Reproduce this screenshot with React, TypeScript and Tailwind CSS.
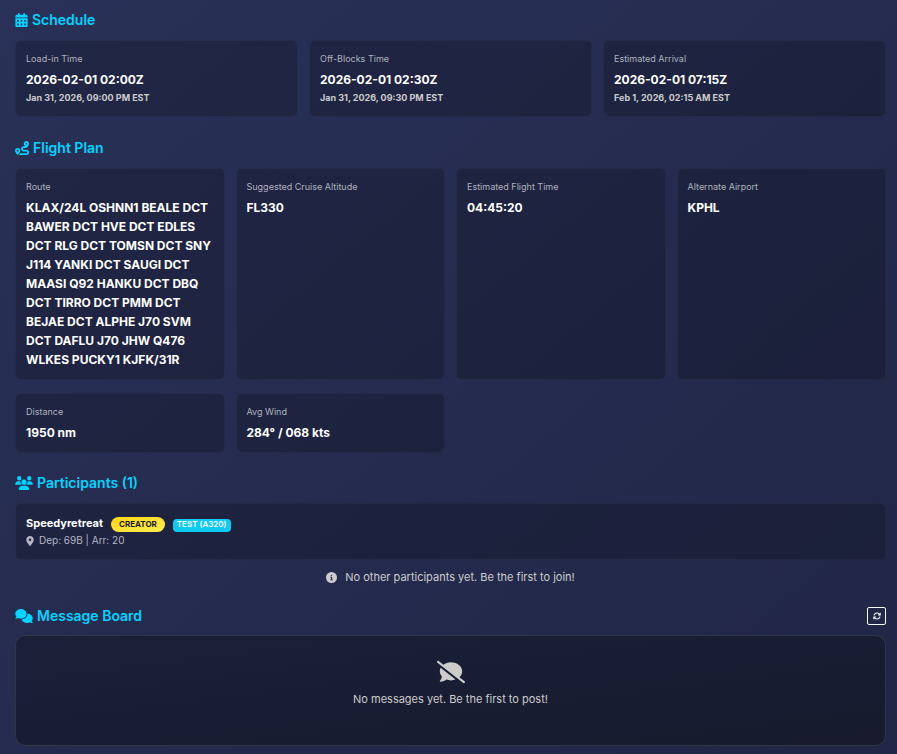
import type { ReactNode } from "react";
import {
  FaCalendarDays,
  FaRoute,
  FaUsers,
  FaComments,
  FaCommentSlash,
  FaCircleInfo,
  FaLocationDot,
  FaRotate,
} from "react-icons/fa6";

type Item = { label: string; value: string; note?: string };

const schedule: Item[] = [
  { label: "Load-in Time", value: "2026-02-01 02:00Z", note: "Jan 31, 2026, 09:00 PM EST" },
  { label: "Off-Blocks Time", value: "2026-02-01 02:30Z", note: "Jan 31, 2026, 09:30 PM EST" },
  { label: "Estimated Arrival", value: "2026-02-01 07:15Z", note: "Feb 1, 2026, 02:15 AM EST" },
];

const flightPlan: Item[] = [
  {
    label: "Route",
    value:
      "KLAX/24L OSHNN1 BEALE DCT BAWER DCT HVE DCT EDLES DCT RLG DCT TOMSN DCT SNY J114 YANKI DCT SAUGI DCT MAASI Q92 HANKU DCT DBQ DCT TIRRO DCT PMM DCT BEJAE DCT ALPHE J70 SVM DCT DAFLU J70 JHW Q476 WLKES PUCKY1 KJFK/31R",
  },
  { label: "Suggested Cruise Altitude", value: "FL330" },
  { label: "Estimated Flight Time", value: "04:45:20" },
  { label: "Alternate Airport", value: "KPHL" },
  { label: "Distance", value: "1950 nm" },
  { label: "Avg Wind", value: "284° / 068 kts" },
];

function Heading({ icon, children }: { icon: ReactNode; children: ReactNode }) {
  return (
    <h2 className="flex h-5 items-center gap-1 text-[14px] leading-5 font-semibold text-[#00d4ff]">
      {icon}
      {children}
    </h2>
  );
}

function InfoCard({ label, value, note }: Item) {
  return (
    <div className="rounded-md border border-white/3 bg-black/20 p-2.5">
      <dt className="mb-1 text-[9px] leading-[15px] text-[#b0b2be]">{label}</dt>
      <dd className="text-[12px] leading-[19px] font-bold text-white">
        {value}
        {note && <small className="block text-[9px] leading-[17px] text-[#cccccc]">{note}</small>}
      </dd>
    </div>
  );
}

export default function App() {
  return (
    <main className="min-h-screen bg-linear-to-br from-[#293158] to-[#212646] pt-2.5 pr-[11px] pb-2 pl-[15px] font-['Inter',sans-serif] text-[#cccccc]">
      <section>
        <Heading icon={<FaCalendarDays className="h-3.5 w-[13px]" />}>Schedule</Heading>
        <dl className="mt-2.5 grid grid-cols-3 gap-x-[11px] gap-y-[13px]">
          {schedule.map((item) => (
            <InfoCard key={item.label} {...item} />
          ))}
        </dl>
      </section>

      <section className="mt-[21px]">
        <Heading icon={<FaRoute className="size-3.5" />}>Flight Plan</Heading>
        <dl className="mt-2.5 grid grid-cols-4 gap-x-[11px] gap-y-[13px]">
          {flightPlan.map((item) => (
            <InfoCard key={item.label} {...item} />
          ))}
        </dl>
      </section>

      <section className="mt-5">
        <Heading icon={<FaUsers className="h-3.5 w-[18px]" />}>Participants (1)</Heading>
        <div className="mt-2.5 rounded-md border border-white/3 bg-black/20 px-2.5 pt-[9px] pb-[11px]">
          <div className="flex h-5 items-center gap-2">
            <strong className="text-[11px] leading-5 font-bold text-white">Speedyretreat</strong>
            <span className="mt-[3px] rounded-full bg-linear-to-br from-[#ffd700] to-[#ffed4e] px-2 text-[8px] leading-[15px] font-bold text-[#1a1a2e]">
              CREATOR
            </span>
            <span className="mt-1 rounded-sm bg-[#0dcaf0] px-1 pb-0.5 text-[8px] leading-[11px] font-semibold text-white">
              TEST (A320)
            </span>
          </div>
          <p className="flex items-center gap-[5px] text-[10px] leading-[15px] text-[#b4b6c2]">
            <FaLocationDot className="h-2.5 w-2" />
            Dep: 69B | Arr: 20
          </p>
        </div>
        <p className="mt-[9px] flex items-center justify-center gap-2 text-[11px] leading-4">
          <FaCircleInfo />
          No other participants yet. Be the first to join!
        </p>
      </section>

      <section className="mt-[21px]">
        <div className="flex items-center justify-between">
          <Heading icon={<FaComments className="h-3.5 w-[18px]" />}>Message Board</Heading>
          <button
            type="button"
            aria-label="Refresh messages"
            className="flex h-[18px] w-[19px] items-center justify-center rounded-xs border border-[#f8f9fa] text-[8px] text-[#f8f9fa]"
          >
            <FaRotate />
          </button>
        </div>
        <div className="mt-[9px] flex h-[111px] flex-col items-center rounded-[10px] border border-white/10 bg-linear-to-br from-[#1b1f39] to-[#171b2d] pt-6">
          <FaCommentSlash className="h-6 w-7" />
          <p className="mt-[7px] text-[11px] leading-4">No messages yet. Be the first to post!</p>
        </div>
      </section>
    </main>
  );
}
